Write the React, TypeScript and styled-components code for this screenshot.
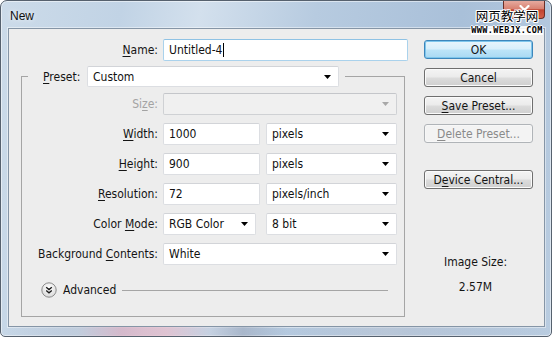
import React from "react";
import styled, { createGlobalStyle } from "styled-components";

const GlobalStyle = createGlobalStyle`
  html, body {
    margin: 0;
    padding: 0;
    background: #ffffff;
  }
  body {
    font-family: "DejaVu Sans Condensed", "Liberation Sans", sans-serif;
    font-size: 12px;
    color: #141414;
  }
`;

const Window = styled.div`
  position: relative;
  box-sizing: border-box;
  width: 552px;
  height: 337px;
  display: flex;
  flex-direction: column;
  border: 1px solid #56616e;
  border-radius: 7px 7px 5px 5px;
  overflow: hidden;
  background: linear-gradient(
    100deg,
    #ccdbe9 0%,
    #c1d3e5 20%,
    #d3e0ed 33%,
    #b7cbe0 52%,
    #a9c0d9 76%,
    #b9cce0 100%
  );
  box-shadow: inset 0 0 0 1px rgba(255, 255, 255, 0.5);
`;

const TitleBar = styled.div`
  display: flex;
  flex-shrink: 0;
  height: 27px;
`;

const Title = styled.div`
  padding: 8px 0 0 9px;
  font-family: "Liberation Sans", sans-serif;
  font-size: 12px;
  color: #101010;
  text-shadow: 0 0 5px rgba(255, 255, 255, 0.9);
`;

const CloseButton = styled.div`
  box-sizing: border-box;
  margin-left: auto;
  margin-right: 6px;
  width: 42px;
  height: 18px;
  display: flex;
  align-items: center;
  justify-content: center;
  border: 1px solid #6a2e26;
  border-top: none;
  border-radius: 0 0 4px 4px;
  background: linear-gradient(#e6aa9f 0%, #d88272 45%, #c0432f 52%, #d4614b 100%);
`;

const Watermark = styled.div`
  position: absolute;
  top: 7px;
  left: 468px;
  width: 76px;
  display: flex;
  flex-direction: column;
  align-items: center;
  pointer-events: none;
`;

const WatermarkCn = styled.div`
  font-family: "Noto Sans CJK SC", sans-serif;
  font-size: 12.5px;
  line-height: 15px;
  color: #000;
  text-shadow: 1px 0 0 #fff, -1px 0 0 #fff, 0 1px 0 #fff, 0 -1px 0 #fff,
    1px 1px 0 #fff, -1px -1px 0 #fff, 1px -1px 0 #fff, -1px 1px 0 #fff;
`;

const WatermarkUrl = styled.div`
  margin-top: 3px;
  font-family: "DejaVu Sans Mono", monospace;
  font-weight: bold;
  font-size: 8.5px;
  line-height: 9px;
  letter-spacing: 0.4px;
  color: #000;
  background: rgba(255, 255, 255, 0.85);
  text-shadow: 1px 0 0 #fff, -1px 0 0 #fff, 0 1px 0 #fff, 0 -1px 0 #fff;
`;

const Client = styled.div`
  flex: 1;
  display: flex;
  margin: 0 6px 0 7px;
  background: #ededed;
  border: 1px solid #8595a6;
  box-shadow: 0 0 0 1px rgba(255, 255, 255, 0.45);
`;

const FrameFoot = styled.div`
  flex-shrink: 0;
  height: 9px;
  background: linear-gradient(
    90deg,
    rgba(255, 255, 255, 0) 0%,
    rgba(190, 200, 215, 0.6) 14%,
    rgba(215, 170, 190, 0.7) 22%,
    rgba(230, 185, 200, 0.7) 30%,
    rgba(200, 205, 220, 0.4) 38%,
    rgba(150, 160, 180, 0.5) 44%,
    rgba(255, 255, 255, 0) 52%,
    rgba(200, 205, 215, 0.5) 70%,
    rgba(255, 255, 255, 0) 100%
  );
`;

const LeftPane = styled.div`
  display: flex;
  flex-direction: column;
  width: 387px;
  padding: 10px 0 0 12px;
`;

const RightPane = styled.div`
  display: flex;
  flex-direction: column;
  width: 109px;
  margin-left: 16px;
  padding-top: 11px;
`;

const Row = styled.div<{ $label: number }>`
  display: grid;
  grid-template-columns: ${(p) => p.$label}px auto;
  column-gap: 5px;
  align-items: center;
  height: 22px;
`;

const Label = styled.div<{ $disabled?: boolean }>`
  text-align: right;
  white-space: nowrap;
  color: ${(p) => (p.$disabled ? "#a3a3a3" : "#141414")};
`;

const Key = styled.span`
  text-decoration: underline;
  text-underline-offset: 2px;
`;

const Fields = styled.div<{ $gap?: number }>`
  display: flex;
  gap: ${(p) => p.$gap ?? 6}px;
`;

const Box = styled.div<{ $w: number; $h?: number; $focus?: boolean; $disabled?: boolean }>`
  box-sizing: border-box;
  width: ${(p) => p.$w}px;
  height: ${(p) => p.$h ?? 22}px;
  display: flex;
  align-items: center;
  padding: 0 7px 0 5px;
  background: ${(p) => (p.$disabled ? "#f0f0f0" : "#ffffff")};
  border: 1px solid ${(p) => (p.$focus ? "#aad2ec" : p.$disabled ? "#cfd1d4" : "#dcdee2")};
  border-top-color: ${(p) => (p.$focus ? "#8fc2e4" : p.$disabled ? "#c4c6ca" : "#d2d4d8")};
  border-radius: 2px;
  white-space: nowrap;
  color: #111;
`;

const Caret = styled.span`
  display: inline-block;
  width: 1px;
  height: 14px;
  margin-left: 1px;
  background: #000;
`;

const ArrowIcon = styled.svg`
  margin-left: auto;
  flex-shrink: 0;
`;

const Group = styled.fieldset`
  box-sizing: border-box;
  width: 384px;
  height: 251px;
  margin: 5px 0 0 0;
  padding: 0;
  min-width: 0;
  border: 1px solid #a5a5a5;
`;

const GroupLegend = styled.legend`
  display: flex;
  align-items: center;
  margin-left: 6px;
  padding: 0 6px 0 15px;
`;

const LegendLabel = styled.div`
  width: 38px;
  margin-right: 6px;
  white-space: nowrap;
`;

const GroupBody = styled.div`
  display: flex;
  flex-direction: column;
  gap: 8px;
  padding-top: 6px;
`;

const AdvancedRow = styled.div`
  display: flex;
  align-items: center;
  height: 16px;
  margin-top: 17px;
  padding: 0 16px 0 19px;
`;

const AdvancedText = styled.span`
  margin-left: 6px;
`;

const Rule = styled.div`
  flex: 1;
  height: 1px;
  margin-left: 6px;
  background: #a5a5a5;
`;

const Button = styled.div<{ $primary?: boolean; $disabled?: boolean; $gap?: number }>`
  box-sizing: border-box;
  height: 19px;
  margin-top: ${(p) => p.$gap ?? 0}px;
  display: flex;
  align-items: center;
  justify-content: center;
  border-radius: 3px;
  border: 1px solid
    ${(p) => (p.$primary ? "#3d86bb" : p.$disabled ? "#b0b4b8" : "#6f6f6f")};
  background: ${(p) =>
    p.$primary
      ? "linear-gradient(#e8f5fc 0%, #d8effb 48%, #bde4f8 52%, #a9d9f3 100%)"
      : p.$disabled
      ? "#f3f3f3"
      : "linear-gradient(#f4f4f4 0%, #ebebeb 48%, #dcdcdc 52%, #cfcfcf 100%)"};
  box-shadow: inset 0 0 0 1px
    ${(p) => (p.$primary ? "#7fc6ec" : p.$disabled ? "#f7f7f7" : "#fbfbfb")};
  color: ${(p) => (p.$disabled ? "#8a8a8a" : "#141414")};
  white-space: nowrap;
`;

const ImageSize = styled.div`
  margin-top: auto;
  padding: 0 6px 26px 0;
  text-align: center;
  line-height: 25px;
`;

const Arrow = ({ disabled }: { disabled?: boolean }) => (
  <ArrowIcon width="7" height="4" viewBox="0 0 7 4">
    <polygon points="0,0 7,0 3.5,4" fill={disabled ? "#a8a8a8" : "#000"} />
  </ArrowIcon>
);

const Select = ({
  w,
  h,
  value,
  disabled,
}: {
  w: number;
  h?: number;
  value?: string;
  disabled?: boolean;
}) => (
  <Box $w={w} $h={h} $disabled={disabled}>
    {value}
    <Arrow disabled={disabled} />
  </Box>
);

const CloseGlyph = () => (
  <svg width="11" height="10" viewBox="0 0 11 10">
    <path
      d="M1.5 1 L9.5 9 M9.5 1 L1.5 9"
      stroke="#ffffff"
      strokeWidth="2.2"
      strokeLinecap="round"
    />
  </svg>
);

const ExpandIcon = () => (
  <svg width="16" height="16" viewBox="0 0 16 16">
    <defs>
      <radialGradient id="adv" cx="50%" cy="35%" r="65%">
        <stop offset="0%" stopColor="#ffffff" />
        <stop offset="100%" stopColor="#d9d9d9" />
      </radialGradient>
    </defs>
    <circle cx="8" cy="8" r="7.2" fill="url(#adv)" stroke="#8c8c8c" />
    <path
      d="M5.2 5.2 L8 7.6 L10.8 5.2 M5.2 8.4 L8 10.8 L10.8 8.4"
      fill="none"
      stroke="#1a1a1a"
      strokeWidth="1.3"
    />
  </svg>
);

const App = () => {
  return (
    <>
      <GlobalStyle />
      <Window>
        <TitleBar>
          <Title>New</Title>
          <CloseButton>
            <CloseGlyph />
          </CloseButton>
        </TitleBar>
        <Client>
          <LeftPane>
            <Row $label={137}>
              <Label>
                <Key>N</Key>ame:
              </Label>
              <Box $w={245} $focus>
                Untitled-4
                <Caret />
              </Box>
            </Row>
            <Group>
              <GroupLegend>
                <LegendLabel>
                  <Key>P</Key>reset:
                </LegendLabel>
                <Select w={252} h={21} value="Custom" />
              </GroupLegend>
              <GroupBody>
                <Row $label={136}>
                  <Label $disabled>
                    Si<Key>z</Key>e:
                  </Label>
                  <Select w={234} disabled />
                </Row>
                <Row $label={136}>
                  <Label>
                    <Key>W</Key>idth:
                  </Label>
                  <Fields>
                    <Box $w={97}>1000</Box>
                    <Select w={131} value="pixels" />
                  </Fields>
                </Row>
                <Row $label={136}>
                  <Label>
                    <Key>H</Key>eight:
                  </Label>
                  <Fields>
                    <Box $w={97}>900</Box>
                    <Select w={131} value="pixels" />
                  </Fields>
                </Row>
                <Row $label={136}>
                  <Label>
                    <Key>R</Key>esolution:
                  </Label>
                  <Fields>
                    <Box $w={97}>72</Box>
                    <Select w={131} value="pixels/inch" />
                  </Fields>
                </Row>
                <Row $label={136}>
                  <Label>
                    Color <Key>M</Key>ode:
                  </Label>
                  <Fields $gap={10}>
                    <Select w={93} value="RGB Color" />
                    <Select w={131} value="8 bit" />
                  </Fields>
                </Row>
                <Row $label={136}>
                  <Label>
                    Background <Key>C</Key>ontents:
                  </Label>
                  <Select w={234} value="White" />
                </Row>
              </GroupBody>
              <AdvancedRow>
                <ExpandIcon />
                <AdvancedText>Advanced</AdvancedText>
                <Rule />
              </AdvancedRow>
            </Group>
          </LeftPane>
          <RightPane>
            <Button $primary>OK</Button>
            <Button $gap={9}>Cancel</Button>
            <Button $gap={9}>
              <Key>S</Key>ave Preset...
            </Button>
            <Button $gap={9} $disabled>
              <Key>D</Key>elete Preset...
            </Button>
            <Button $gap={27}>
              D<Key>e</Key>vice Central...
            </Button>
            <ImageSize>
              Image Size:
              <br />
              2.57M
            </ImageSize>
          </RightPane>
        </Client>
        <FrameFoot />
        <Watermark>
          <WatermarkCn>网页教学网</WatermarkCn>
          <WatermarkUrl>WWW.WEBJX.COM</WatermarkUrl>
        </Watermark>
      </Window>
    </>
  );
};

export default App;
